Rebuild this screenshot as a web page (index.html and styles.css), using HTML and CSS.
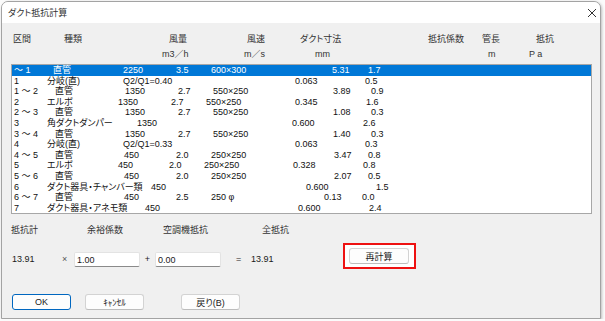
FILE: index.html
```html
<!DOCTYPE html>
<html>
    <head>
        <title>ダクト抵抗計算</title>
        <meta charset="utf-8">
        <link rel="stylesheet" href="styles.css">
    </head>
    <body>
        <div class="dialog">
            <div class="titleBar">
                <span class="titleText">ダクト抵抗計算</span>
                <svg class="closeIcon" width="10" height="10" viewBox="0 0 10 10">
                    <path d="M1 1L9 9M9 1L1 9" stroke="#333" stroke-width="1" fill="none"/>
                </svg>
            </div>
            <div class="dialogBody">
                <div class="head1">
                    <span>区間</span><span>種類</span><span>風量</span><span>風速</span><span>ダクト寸法</span><span>抵抗係数</span><span>管長</span><span>抵抗</span>
                </div>
                <div class="head2">
                    <span>m3／h</span><span>m／s</span><span>mm</span><span>m</span><span>P a</span>
                </div>
                <div class="listBox">
                    <div class="row seg1 sel"><span>～ 1</span><span>直管</span><span>2250</span><span>3.5</span><span>600×300</span><span>5.31</span><span>1.7</span></div>
                    <div class="row brn"><span>1</span><span>分岐(直)</span><span>Q2/Q1=0.40</span><span>0.063</span><span>0.5</span></div>
                    <div class="row seg"><span>1 ～ 2</span><span>直管</span><span>1350</span><span>2.7</span><span>550×250</span><span>3.89</span><span>0.9</span></div>
                    <div class="row elb"><span>2</span><span>エルボ</span><span>1350</span><span>2.7</span><span>550×250</span><span>0.345</span><span>1.6</span></div>
                    <div class="row seg"><span>2 ～ 3</span><span>直管</span><span>1350</span><span>2.7</span><span>550×250</span><span>1.08</span><span>0.3</span></div>
                    <div class="row dmp"><span>3</span><span>角ダクトダンパー</span><span>1350</span><span>0.600</span><span>2.6</span></div>
                    <div class="row seg"><span>3 ～ 4</span><span>直管</span><span>1350</span><span>2.7</span><span>550×250</span><span>1.40</span><span>0.3</span></div>
                    <div class="row brn"><span>4</span><span>分岐(直)</span><span>Q2/Q1=0.33</span><span>0.063</span><span>0.3</span></div>
                    <div class="row seg2"><span>4 ～ 5</span><span>直管</span><span>450</span><span>2.0</span><span>250×250</span><span>3.47</span><span>0.8</span></div>
                    <div class="row elb2"><span>5</span><span>エルボ</span><span>450</span><span>2.0</span><span>250×250</span><span>0.328</span><span>0.8</span></div>
                    <div class="row seg2"><span>5 ～ 6</span><span>直管</span><span>450</span><span>2.0</span><span>250×250</span><span>2.07</span><span>0.5</span></div>
                    <div class="row chm"><span>6</span><span>ダクト器具・チャンバー類</span><span>450</span><span>0.600</span><span>1.5</span></div>
                    <div class="row seg3"><span>6 ～ 7</span><span>直管</span><span>450</span><span>2.5</span><span>250 φ</span><span>0.13</span><span>0.0</span></div>
                    <div class="row anm"><span>7</span><span>ダクト器具・アネモ類</span><span>450</span><span>0.600</span><span>2.4</span></div>
                </div>
                <div class="sumLabels">
                    <span class="lblTotal">抵抗計</span><span class="lblMargin">余裕係数</span><span class="lblUnit">空調機抵抗</span><span>全抵抗</span>
                </div>
                <div class="sumValues">
                    <span class="valText valTotal">13.91</span>
                    <span class="valText valOp">×</span>
                    <input class="numInput" type="text" value="1.00">
                    <span class="valText valPlus">+</span>
                    <input class="numInput" type="text" value="0.00">
                    <span class="valText valEq">=</span>
                    <span class="valText valAll">13.91</span>
                    <div class="markBox"><button class="btn calcBtn">再計算</button></div>
                </div>
                <div class="footer">
                    <button class="btn okBtn">OK</button>
                    <button class="btn cancelBtn">ｷｬﾝｾﾙ</button>
                    <button class="btn">戻り(B)</button>
                </div>
            </div>
        </div>
    </body>
</html>
```

FILE: styles.css
```css
body {
    margin: 0;
    background: #fbfbfb;
    font-family: "Liberation Sans", "Noto Sans CJK JP", sans-serif;
    font-size: 9px;
    color: #1a1a1a;
    font-feature-settings: "palt";
}
.dialog {
    margin: 1px 0 0 1px;
    width: 598px;
    height: 316px;
    border: 1px solid #a3a3a3;
    border-radius: 7px 7px 0 0;
    background: #f0f0f0;
    box-shadow: 1px 1px 3px rgba(0, 0, 0, 0.25);
    overflow: hidden;
}
.titleBar {
    height: 21px;
    background: #fff;
    display: flex;
    align-items: center;
    justify-content: space-between;
    padding: 0 3px 0 6px;
}
.titleText {
    color: #333;
}
.closeIcon {
    display: block;
}
.dialogBody {
    padding-top: 10px;
}
.head1, .head2 {
    display: grid;
    line-height: 12px;
    height: 12px;
    color: #333;
    white-space: nowrap;
}
.head1 {
    padding-left: 11px;
    grid-template-columns: 51px 105px 78px 53px 128px 54px 54px auto;
}
.head2 {
    margin-top: 3px;
    padding-left: 160px;
    grid-template-columns: 82px 71px 173px 41px auto;
}
.listBox {
    margin: 4px 0 0 9px;
    width: 579px;
    height: 148px;
    border: 1px solid #a7a7a7;
    background: #fff;
    color: #111;
}
.row {
    display: grid;
    height: 10.6px;
    line-height: 10.6px;
    padding-left: 2px;
    white-space: nowrap;
}
.sel {
    background: #0078d7;
    color: #fff;
}
.seg1 { grid-template-columns: 39px 70px 53px 35px 121px 36px auto; }
.seg  { grid-template-columns: 41px 70px 53px 35px 120px 38px auto; }
.seg2 { grid-template-columns: 41px 69px 52px 35px 123px 34px auto; }
.seg3 { grid-template-columns: 41px 69px 52px 35px 113px 38px auto; }
.brn  { grid-template-columns: 33px 76px 172px 70px auto; }
.elb  { grid-template-columns: 33px 71px 53px 35px 89px 71px auto; }
.elb2 { grid-template-columns: 33px 71px 51px 35px 89px 70px auto; }
.dmp  { grid-template-columns: 33px 90px 155px 71px auto; }
.chm  { grid-template-columns: 33px 104px 155px 70px auto; }
.anm  { grid-template-columns: 33px 98px 153px 71px auto; }

.sumLabels {
    display: flex;
    margin-top: 10px;
    padding-left: 9px;
    line-height: 12px;
    color: #333;
}
.lblTotal { width: 76px; }
.lblMargin { width: 76px; }
.lblUnit { width: 99px; }

.sumValues {
    display: flex;
    align-items: flex-start;
    margin-top: 7px;
    padding-left: 10px;
    height: 26px;
}
.valText {
    margin-top: 10px;
    line-height: 12px;
}
.valTotal { width: 50px; }
.valOp { width: 12px; color: #555; }
.valPlus { width: 15px; text-align: center; }
.valEq { width: 15px; padding-left: 15px; }
.valAll { width: 92px; }
.numInput {
    box-sizing: border-box;
    margin: 9px 0 0 0;
    width: 66px;
    height: 15px;
    padding: 0 2px;
    border: 1px solid #e3e3e3;
    border-bottom-color: #8a8a8a;
    border-radius: 2px;
    background: #fff;
    font: inherit;
    font-feature-settings: "palt";
    color: #1a1a1a;
}
.markBox {
    box-sizing: border-box;
    width: 73px;
    height: 26px;
    padding: 3px 0 0 4px;
    border: 2px solid #ee1111;
    background: #fff;
}
.btn {
    box-sizing: border-box;
    width: 59px;
    height: 16px;
    padding: 0;
    border: 1px solid #d3d3d3;
    border-bottom-color: #bdbdbd;
    border-radius: 3px;
    background: #fdfdfd;
    font: inherit;
    font-feature-settings: "palt";
    color: #1a1a1a;
}
.calcBtn {
    display: block;
    width: 60px;
}
.footer {
    display: flex;
    margin-top: 25px;
    padding-left: 10px;
}
.okBtn {
    border: 1px solid #0067c0;
    margin-right: 14px;
}
.cancelBtn {
    margin-right: 37px;
}
```
